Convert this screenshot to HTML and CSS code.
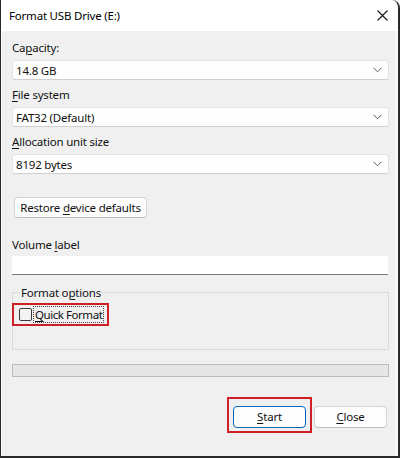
FILE: index.html
```html
<!DOCTYPE html>
<html>
<head>
<meta charset="utf-8">
<link rel="stylesheet" href="styles.css">
</head>
<body>
<div class="window">
  <div class="titlebar">
    <span class="title">Format USB Drive (E:)</span>
    <span class="close-x">
      <svg width="11" height="11" viewBox="0 0 11 11"><path d="M0.5 0.5 L10.5 10.5 M10.5 0.5 L0.5 10.5" stroke="#1a1a1a" stroke-width="1.1" fill="none"/></svg>
    </span>
  </div>
  <div class="content">
    <div class="label first">Ca<u>p</u>acity:</div>
    <div class="combo"><span>14.8 GB</span><svg class="chev" width="9" height="6" viewBox="0 0 9 6"><path d="M0.5 0.8 L4.5 4.8 L8.5 0.8" stroke="#5a5a5a" stroke-width="1" fill="none"/></svg></div>
    <div class="label"><u>F</u>ile system</div>
    <div class="combo"><span>FAT32 (Default)</span><svg class="chev" width="9" height="6" viewBox="0 0 9 6"><path d="M0.5 0.8 L4.5 4.8 L8.5 0.8" stroke="#5a5a5a" stroke-width="1" fill="none"/></svg></div>
    <div class="label"><u>A</u>llocation unit size</div>
    <div class="combo"><span>8192 bytes</span><svg class="chev" width="9" height="6" viewBox="0 0 9 6"><path d="M0.5 0.8 L4.5 4.8 L8.5 0.8" stroke="#5a5a5a" stroke-width="1" fill="none"/></svg></div>
    <button class="btn restore">Restore <u>d</u>evice defaults</button>
    <div class="label vol">Volume <u>l</u>abel</div>
    <div class="textfield"></div>
    <div class="group">
      <span class="legend">Format o<u>p</u>tions</span>
      <div class="highlight">
        <span class="checkbox"></span>
        <span class="focus"><u>Q</u>uick Format</span>
      </div>
    </div>
    <div class="progress"></div>
    <div class="buttons">
      <span class="marked">
        <button class="btn primary"><u>S</u>tart</button>
        <span class="mark"></span>
      </span>
      <button class="btn"><u>C</u>lose</button>
    </div>
  </div>
</div>
</body>
</html>
```

FILE: styles.css
```css
html, body {
  margin: 0;
  padding: 0;
}
body {
  background: #ffffff;
  width: 400px;
  height: 458px;
  overflow: hidden;
  font-family: "Noto Sans", "Open Sans", sans-serif;
  font-size: 11.5px;
  color: #111;
}
u {
  text-decoration-thickness: 1px;
  text-underline-offset: 2px;
}
.window {
  width: 397px;
  height: 456px;
  background: #f0f0f0;
  border-left: 1px solid #2a2a2a;
  border-right: 2px solid #2a2a2a;
  border-bottom: 2px solid #2a2a2a;
  border-top-right-radius: 8px;
  overflow: hidden;
  display: flex;
  flex-direction: column;
  box-shadow: inset 1px 0 0 #fbfbfb, inset -3px 0 0 #f7f7f7;
}
.titlebar {
  height: 31px;
  flex: none;
  background: #ffffff;
  display: flex;
  align-items: center;
  justify-content: space-between;
  padding: 0 10px 0 8px;
  border-top-right-radius: 8px;
}
.title {
  color: #000;
  letter-spacing: -0.2px;
}
.close-x {
  display: flex;
  width: 11px;
  height: 11px;
}
.content {
  flex: 1;
  display: flex;
  flex-direction: column;
  padding: 9px 9px 0 11px;
}
.label {
  line-height: 16px;
  height: 16px;
  margin-top: 7px;
  letter-spacing: -0.2px;
}
.label.first {
  margin-top: 0;
}
.combo {
  margin-top: 4px;
  height: 18px;
  background: #fefefe;
  border: 1px solid #e3e3e3;
  border-bottom-color: #cfcfcf;
  border-radius: 3px;
  display: flex;
  align-items: center;
  justify-content: space-between;
  padding: 0 6px 0 3px;
  letter-spacing: -0.2px;
}
.chev {
  display: block;
}
.btn {
  font-family: inherit;
  font-size: 11.5px;
  color: #111;
  background: #fdfdfd;
  border: 1px solid #d3d3d3;
  border-bottom-color: #bdbdbd;
  border-radius: 4px;
  height: 21px;
  padding: 0;
  line-height: 18px;
  letter-spacing: -0.2px;
}
.restore {
  align-self: flex-start;
  margin-top: 23px;
  margin-left: 2px;
  width: 133px;
}
.label.vol {
  margin-top: 19px;
}
.textfield {
  margin-top: 3px;
  margin-right: 1px;
  height: 18px;
  background: #ffffff;
  border-bottom: 1px solid #7a7a7a;
}
.group {
  margin-top: 17px;
  height: 56px;
  border: 1px solid #dadada;
  display: flex;
  flex-direction: column;
  align-items: flex-start;
}
.legend {
  margin-top: -8px;
  margin-left: 7px;
  padding: 0 1px;
  line-height: 16px;
  height: 16px;
  background: #f0f0f0;
  letter-spacing: -0.2px;
}
.highlight {
  margin-top: 2px;
  margin-left: -1px;
  height: 19px;
  border: 2px solid #cf1e25;
  display: flex;
  align-items: center;
  padding-left: 5px;
  box-sizing: content-box;
  width: 88px;
}
.checkbox {
  width: 11px;
  height: 11px;
  border: 1px solid #3a3a3a;
  border-radius: 2px;
  background: #f4f4f4;
  flex: none;
}
.focus {
  margin-left: 2px;
  padding: 0 1px;
  line-height: 15px;
  outline: 1px dotted #444;
  letter-spacing: -0.45px;
  white-space: nowrap;
}
.progress {
  margin-top: 14px;
  height: 11px;
  background: #e6e6e6;
  border: 1px solid #bcbcbc;
}
.buttons {
  margin-top: 29px;
  display: flex;
  justify-content: flex-end;
  gap: 8px;
  padding-right: 2px;
}
.buttons .btn {
  width: 73px;
  height: 22px;
}
.btn.primary {
  border: 1px solid #0067c0;
  border-radius: 4px;
  background: #fdfdfd;
  display: block;
}
.marked {
  position: relative;
  display: block;
}
.mark {
  position: absolute;
  left: -6px;
  right: -6px;
  top: -9px;
  bottom: -5px;
  border: 2px solid #cf1e25;
}
```
